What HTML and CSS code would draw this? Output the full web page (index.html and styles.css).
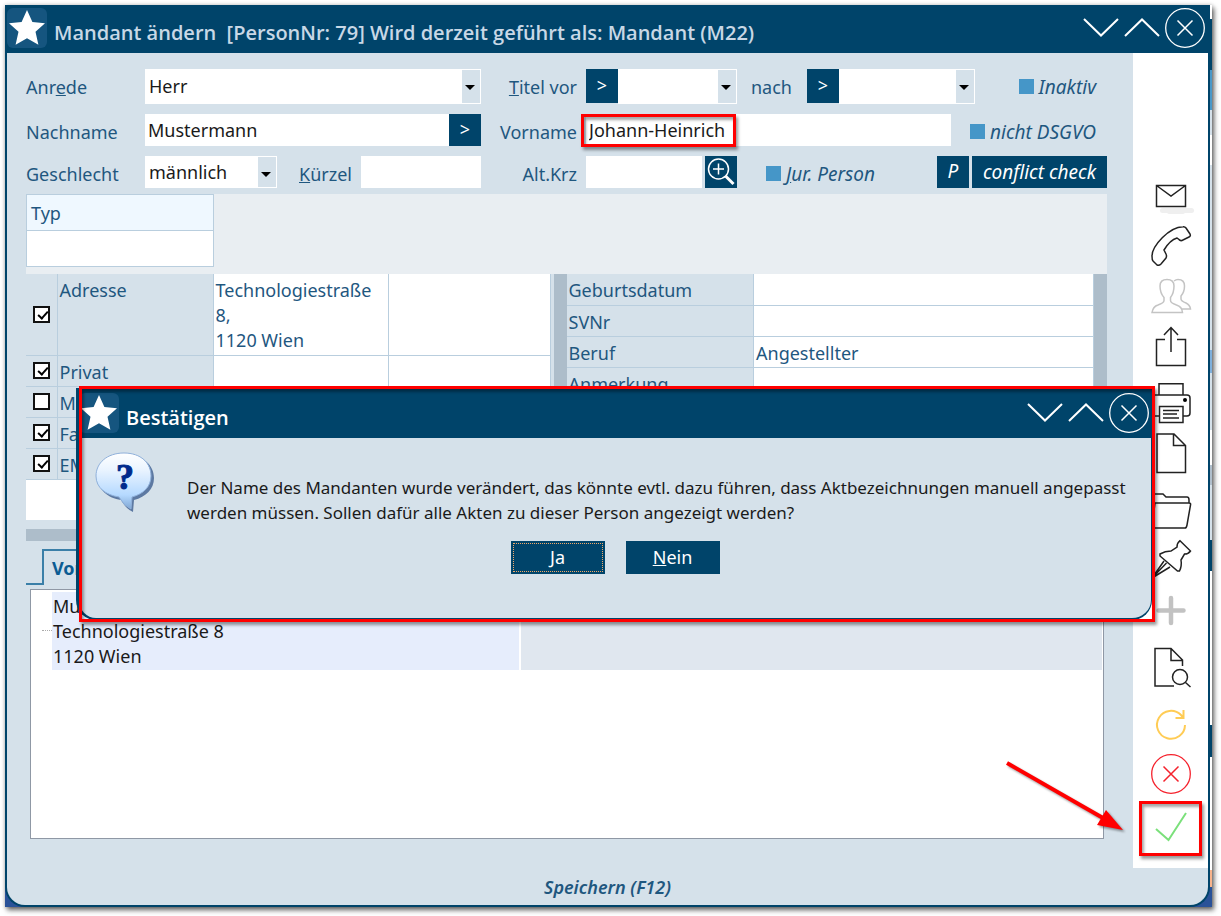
FILE: index.html
```html
<!DOCTYPE html>
<html lang="de">
<head>
<meta charset="utf-8">
<title>Mandant ändern</title>
<link rel="stylesheet" href="styles.css">
</head>
<body>
<svg class="defs" aria-hidden="true">
  <symbol id="star" viewBox="0 0 40 40"><path d="M20 2l5.400 12 12.600 1.200-9.500 8.600 2.900 13L20 30.200 8.600 36.800l2.900-13L2 15.200 14.600 14z" fill="#fff"/></symbol>
  <symbol id="down" viewBox="0 0 36 20"><path d="M1 1l17 16.500L35 1" fill="none" stroke="#fff" stroke-width="2"/></symbol>
  <symbol id="up" viewBox="0 0 36 20"><path d="M1 18L18 1.500 35 18" fill="none" stroke="#fff" stroke-width="2"/></symbol>
  <symbol id="close" viewBox="0 0 40 40"><circle cx="20" cy="20" r="19.300" fill="none" stroke="currentColor" stroke-width="1.300"/><path d="M12.500 12.500l15 15m0-15l-15 15" fill="none" stroke="currentColor" stroke-width="1.500"/></symbol>
</svg>

<div class="shot">
<div class="window">
  <header class="titlebar">
    <span class="logo"><svg><use href="#star"/></svg></span>
    <h1 class="title">Mandant ändern  [PersonNr: 79] Wird derzeit geführt als: Mandant (M22)</h1>
    <div class="controls">
      <button type="button" class="ctl" aria-label="Minimieren"><svg class="chev"><use href="#down"/></svg></button>
      <button type="button" class="ctl" aria-label="Maximieren"><svg class="chev"><use href="#up"/></svg></button>
      <button type="button" class="ctl" aria-label="Schließen"><svg class="circ"><use href="#close"/></svg></button>
    </div>
  </header>

  <div class="content">
    <main class="main">
      <form class="form">
        <div class="row row-tall">
          <label for="anrede">Anr<u>e</u>de</label>
          <span class="select"><select id="anrede"><option>Herr</option></select></span>
          <label for="titelvor" class="lab-right"><u>T</u>itel vor</label>
          <div class="cell">
            <button type="button" class="btn sq">&gt;</button>
            <span class="select w-vor"><select id="titelvor"><option></option></select></span>
            <label for="titelnach" class="lab-nach">nach</label>
            <button type="button" class="btn sq">&gt;</button>
            <span class="select w-nach"><select id="titelnach"><option></option></select></span>
            <label class="check end"><input type="checkbox">Inaktiv</label>
          </div>
        </div>
        <div class="row">
          <label for="nachname">Nachname</label>
          <div class="cell"><input class="text" id="nachname" value="Mustermann"><button type="button" class="btn sq">&gt;</button></div>
          <label for="vorname" class="lab-right">Vorname</label>
          <div class="cell">
            <span class="vorname"><input class="text" id="vorname" value="Johann-Heinrich"><span class="mark mark-name"></span></span>
            <label class="check end"><input type="checkbox">nicht DSGVO</label>
          </div>
        </div>
        <div class="row">
          <label for="geschlecht">Geschlecht</label>
          <div class="cell">
            <span class="select w-sex"><select id="geschlecht"><option>männlich</option></select></span>
            <label for="kuerzel" class="lab-kz"><u>K</u>ürzel</label>
            <input class="text" id="kuerzel">
          </div>
          <label for="altkrz" class="lab-right">Alt.Krz</label>
          <div class="cell">
            <input class="text w-alt" id="altkrz">
            <button type="button" class="btn sq search" aria-label="Suchen"><svg viewBox="0 0 32 32"><g fill="none" stroke="#fff"><circle cx="13.500" cy="13" r="10" stroke-width="1.500"/><path d="M8 13h11M13.500 7.500v11" stroke-width="1.500"/><path d="M20.500 20l8 8" stroke-width="3"/></g></svg></button>
            <label class="check jur"><input type="checkbox"><span><u>J</u>ur. Person</span></label>
            <button type="button" class="btn sq ital p-btn">P</button>
            <button type="button" class="btn ital conflict">conflict check</button>
          </div>
        </div>
      </form>

      <section class="typ">
        <table class="typ-table"><thead><tr><th>Typ</th></tr></thead><tbody><tr><td></td></tr></tbody></table>
      </section>

      <section class="grids">
        <div class="contact">
          <table class="grid">
            <colgroup><col class="c-chk"><col class="c-lab"><col class="c-val"><col></colgroup>
            <tr class="tall"><td class="chk"><input type="checkbox" checked aria-label="Adresse"></td><th>Adresse</th><td>Technologiestraße 8,<br>1120 Wien</td><td></td></tr>
            <tr><td class="chk"><input type="checkbox" checked aria-label="Privat"></td><th>Privat</th><td></td><td></td></tr>
            <tr><td class="chk"><input type="checkbox" aria-label="Mobil"></td><th>Mobil</th><td></td><td></td></tr>
            <tr><td class="chk"><input type="checkbox" checked aria-label="Fax"></td><th>Fax</th><td></td><td></td></tr>
            <tr><td class="chk"><input type="checkbox" checked aria-label="EMail"></td><th>EMail</th><td></td><td></td></tr>
          </table>
        </div>
        <div class="vbar"></div>
        <div class="person">
          <table class="grid">
            <colgroup><col class="c-plab"><col></colgroup>
            <tr><th>Geburtsdatum</th><td></td></tr>
            <tr><th>SVNr</th><td></td></tr>
            <tr><th>Beruf</th><td>Angestellter</td></tr>
            <tr><th>Anmerkung</th><td></td></tr>
          </table>
        </div>
        <div class="vbar"></div>
      </section>
      <div class="hbar"></div>

      <nav class="tabs"><button type="button" class="tab">Vorschau</button></nav>
      <section class="tree">
        <div class="tree-row">
          <span class="branch"></span>
          <div class="node">Mustermann<br>Technologiestraße 8<br>1120 Wien</div>
          <div class="node-rest"></div>
        </div>
      </section>
    </main>

    <aside class="tools">
      <div class="group">
        <button type="button" class="tool" aria-label="E-Mail"><svg viewBox="0 0 40 40"><rect x="9" y="32" width="34" height="5" rx="2.500" fill="#efefef"/><rect x="16" y="34" width="18" height="4" rx="2" fill="#efefef"/><path d="M5.500 9.500h29v21h-29zM5.500 9.500L20 20 34.500 9.500" class="ln"/></svg></button>
        <button type="button" class="tool" aria-label="Anrufen"><svg viewBox="0 0 40 40"><path class="ln" d="M1 30C1 20 18 1 32 .7Q34 .5 35 2L39 8Q40 10 38 11L31 14.500Q29 15 28 13.500L26 12Q19 14 13 24L15 28Q16 30 15 32L10 38Q8 40 6 39L2 35Q1 34 1 30z"/></svg></button>
        <button type="button" class="tool" aria-label="Personen"><svg viewBox="0 0 40 40"><path class="ln grey" d="M1 36.500q1-6 6-7.500 6-2 6-4.500v-3Q9 17 9 10q0-6.500 7-6.500t7 6.500q0 7-3.500 11.500v3q0 2.500 6 4.500 5.500 1.500 6 7.500zM23 5q2-1.500 4-1.500 6.500 0 6.500 6.500 0 6-3.500 10v3q0 2 5 4 4 2 4.500 6H31"/></svg></button>
        <button type="button" class="tool" aria-label="Exportieren"><svg viewBox="0 0 40 40"><path class="ln" d="M14 13.500H5.500v26h29v-26H26M20 26V1.500M13 9l7-7.500L27 9"/></svg></button>
      </div>
      <div class="group">
        <button type="button" class="tool" aria-label="Drucken"><svg viewBox="0 0 40 40"><path class="ln" d="M8 12V.7h24V12M8 33H2V12h34q3 0 3 3v15q0 3-3 3h-4M8.500 23.500h23.500v16H8.500zM12 27.500h16M12 31h14M12 35h16"/><circle cx="34" cy="17" r="2"/></svg></button>
        <button type="button" class="tool" aria-label="Dokument"><svg viewBox="0 0 40 40"><path class="ln" d="M6 1h17l11.500 11.500v27H6zM22.500 1v11.500h12"/></svg></button>
      </div>
      <div class="group">
        <button type="button" class="tool" aria-label="Ordner"><svg viewBox="0 0 40 40"><path class="ln" d="M1 36V7q0-3 3-3h8l3 3h21q2 0 2 3v3M1 36L4 13h34q2 0 1.500 2L36 35q-.5 3-2 3H1"/></svg></button>
        <button type="button" class="tool" aria-label="Anheften"><svg viewBox="0 0 40 40"><path class="ln" d="M29 .7L39.500 11q-2 3-6 3L30 20q1 6-1.500 11h-2L9 16v-2q5-3 11-3l6-4q0-4 3-6.300zM13 21L1 38l18-11M15.500 23L2 37"/></svg></button>
        <button type="button" class="tool" aria-label="Hinzufügen"><svg viewBox="0 0 40 40"><path d="M20 8v25M7.500 20.500h25" stroke="#c2c2c2" stroke-width="4.500" stroke-linecap="round"/></svg></button>
      </div>
      <div class="group">
        <button type="button" class="tool" aria-label="Vorschau"><svg viewBox="0 0 40 40"><path class="ln" d="M23 39H4V1.500h16L31.500 13v6M20 1.500V13.500h11.500"/><circle class="ln" cx="29" cy="30" r="7.500"/><path class="ln" d="M34.500 35.500l5 4.500"/></svg></button>
      </div>
      <div class="group">
        <button type="button" class="tool" aria-label="Aktualisieren"><svg viewBox="0 0 40 40"><path fill="none" stroke="#fc5" stroke-width="2" d="M34 21A14 14 0 1 1 30 11L32.500 14M32.500 6v8H24.500"/></svg></button>
        <button type="button" class="tool red" aria-label="Abbrechen"><svg><use href="#close"/></svg></button>
        <button type="button" class="tool last" aria-label="Speichern"><svg viewBox="0 0 40 40"><path fill="none" stroke="#7be07b" stroke-width="2" d="M5 21l12.500 11L35 5"/></svg><span class="mark mark-save"></span></button>
      </div>
    </aside>
  </div>

  <footer class="footer">Speichern (F12)</footer>

  <svg class="arrow" viewBox="0 0 120 74" aria-hidden="true"><path d="M4 4L100 59" stroke="#f00" stroke-width="4"/><path d="M103 51L120 71 94 66z" fill="#f00"/></svg>

  <div class="dialog" role="dialog" aria-labelledby="dlg-title">
    <div class="dlg-box">
      <header class="titlebar dlg-bar">
        <span class="logo"><svg><use href="#star"/></svg></span>
        <h2 class="title dlg-title" id="dlg-title">Bestätigen</h2>
        <div class="controls">
          <button type="button" class="ctl" aria-label="Minimieren"><svg class="chev"><use href="#down"/></svg></button>
          <button type="button" class="ctl" aria-label="Maximieren"><svg class="chev"><use href="#up"/></svg></button>
          <button type="button" class="ctl" aria-label="Schließen"><svg class="circ"><use href="#close"/></svg></button>
        </div>
      </header>
      <div class="dlg-body">
        <svg class="question" viewBox="0 0 62 62" aria-hidden="true">
          <defs><linearGradient id="bub" x1="0" y1="0" x2="0" y2="1"><stop offset="0" stop-color="#fff"/><stop offset=".3" stop-color="#eaf4ff"/><stop offset=".75" stop-color="#b5d9ff"/><stop offset="1" stop-color="#7fa6d3"/></linearGradient></defs>
          <path transform="translate(2 2)" d="M30 2c17 0 28 10 28 23 0 11-8 19-20 22l-1 12q-7-3-12-12C12 45 2 37 2 25 2 12 13 2 30 2z" fill="#34568a" opacity=".75"/>
          <path d="M30 2c17 0 27 10 27 23 0 11-8 18-19 21l-1 12q-7-3-12-12C12 44 2 37 2 25 2 12 13 2 30 2z" fill="url(#bub)" stroke="#8fb0da" stroke-width="1"/>
          <text x="31" y="38" text-anchor="middle" class="qmark">?</text>
        </svg>
        <p class="message">Der Name des Mandanten wurde verändert, das könnte evtl. dazu führen, dass Aktbezeichnungen manuell angepasst werden müssen. Sollen dafür alle Akten zu dieser Person angezeigt werden?</p>
      </div>
      <div class="dlg-actions">
        <button type="button" class="btn dlg-btn focus"><u>J</u>a</button>
        <button type="button" class="btn dlg-btn"><u>N</u>ein</button>
      </div>
    </div>
    <span class="mark mark-dialog"></span>
  </div>
</div>
</div>
</body>
</html>
```

FILE: styles.css
```css
* { box-sizing: border-box; }

body {
  margin: 0;
  padding: 5px 9px 9px 5px;
  min-height: 100vh;
  display: flex;
  background: #fff;
  color: #1f577f;
  font: 18px/25px "Noto Sans", "Open Sans", sans-serif;
}

button, input, select { font: inherit; margin: 0; border: 0; border-radius: 0; }
button { padding: 0; cursor: pointer; }
h1, h2, p { margin: 0; }
.defs { position: absolute; width: 0; height: 0; }

.shot {
  flex: 1;
  display: flex;
  padding-right: 2px;
  background: linear-gradient(#fff 14px, #00446a 14px 65px, #4a98c8 65px 105px, #d5e1ea 105px 130px, #fff 130px 160px, #d5e1ea 160px 345px, #7fb0dc 345px 368px, #d5e1ea 368px 425px, #fff 425px 460px, #b0bfcc 460px 480px, #d5e1ea 480px 535px, #00446a 535px 566px, #fff 566px 720px, #00446a 720px 752px, #fff 752px 865px, #f9b48c 865px 882px, #2a5298 882px);
  box-shadow: 2px 3px 5px rgba(0, 0, 0, .6), 0 0 4px rgba(0, 0, 0, .2);
}

.window {
  position: relative;
  flex: 1;
  display: flex;
  flex-direction: column;
  border: 2px solid #00446a;
  border-top: 0;
  border-radius: 0 0 20px 20px;
  background: #d5e1ea;
}

.titlebar {
  display: flex;
  align-items: center;
  height: 48px;
  padding: 0 3px 2px 0;
  background: #00446a;
}
.logo {
  display: flex;
  width: 40px;
  height: 40px;
  border-radius: 6px;
  background: #15557f;
}
.logo svg { width: 40px; height: 40px; }
.title {
  flex: 1;
  padding: 8px 0 0 7px;
  font: 600 20px/25px "Open Sans", "Noto Sans", sans-serif;
  color: #c8d8e6;
  white-space: pre;
}
.controls { display: flex; align-items: center; gap: 5px; }
.ctl { display: flex; background: none; color: #fff; }
.chev { width: 36px; height: 20px; }
.circ { width: 40px; height: 40px; }

.content { flex: 1; display: flex; }
.main {
  flex: 1;
  min-width: 0;
  display: flex;
  flex-direction: column;
  padding: 16px 26px 29px 19px;
}

.form { display: flex; flex-direction: column; gap: 10px; }
.row {
  display: grid;
  grid-template-columns: 119px minmax(0, 336fr) 105px minmax(0, 521fr);
  height: 32px;
}
.row-tall { height: 35px; }
.row label { padding-top: 6px; white-space: nowrap; }
.row .lab-right { justify-self: end; padding-right: 9px; }
.cell { display: flex; min-width: 0; }
.text {
  flex: 1;
  min-width: 0;
  padding: 0 3px;
  background: #fff;
  color: #1a1a1a;
}
.select { position: relative; display: flex; border: 1px solid #fff; }
.select select {
  flex: 1;
  min-width: 0;
  padding: 0 20px 0 3px;
  appearance: none;
  background: linear-gradient(#d5e1ea, #d5e1ea) right / 18px 100% no-repeat #fff;
  color: #1a1a1a;
}
.select::after {
  content: "";
  position: absolute;
  right: 5px;
  top: 15px;
  border: 5px solid transparent;
  border-top-color: #000;
  border-bottom: 0;
  pointer-events: none;
}
.w-vor { flex: 0 1 119px; }
.w-nach { flex: 0 1 136px; }
.w-sex { flex: 0 0 132px; }
.row .lab-nach { padding-left: 14px; width: 70px; }
.row .lab-kz { padding-left: 22px; width: 84px; }
.btn { background: #00446a; color: #fff; }
.sq { flex: 0 0 32px; }
.row .sq { padding-bottom: 2px; }
.row-tall .sq { height: 34px; }
.ital { font-size: 19px; font-style: italic; }
.check { display: flex; align-items: flex-start; gap: 5px; font-size: 19px; font-style: italic; }
.check input {
  appearance: none;
  width: 15px;
  height: 15px;
  margin-top: 4px;
  background: #4596c8;
}
.check.end { margin-left: auto; padding-right: 11px; }
.vorname { position: relative; flex: 0 1 365px; display: flex; }
.w-alt { flex: 0 0 116px; }
.row .search { margin-left: 3px; padding: 0; }
.search svg { display: block; width: 32px; height: 32px; }
.jur { margin-left: 29px; }
.p-btn { margin-left: auto; }
.conflict { margin-left: 3px; width: 135px; }

.typ { margin-top: 6px; height: 80px; background: #e9eef2; }
.typ-table { width: 188px; border-collapse: collapse; }
.typ-table th, .typ-table td {
  height: 36px;
  padding: 2px 4px 0;
  border: 1px solid #b9cede;
  background: #fff;
  text-align: left;
  font-weight: 400;
}
.typ-table th { background: #eff8ff; }

.grids { display: flex; height: 246px; overflow: hidden; }
.contact { flex: 525 1 0; margin-right: 3px; background: #fff; overflow: hidden; }
.person { flex: 528 1 0; background: #fff; overflow: hidden; }
.vbar { flex: 0 0 13px; background: #adbdca; }
.grid { width: 100%; border-collapse: collapse; table-layout: fixed; }
.grid th, .grid td {
  height: 31px;
  padding: 4px 2px 1px;
  border-right: 1px solid #b9cede;
  border-bottom: 1px solid #b9cede;
  text-align: left;
  vertical-align: top;
  font-weight: 400;
}
.grid th, .grid .chk { background: #d5e1ea; }
.grid .chk { padding: 0; text-align: center; vertical-align: middle; }
.tall td { height: 81px; }
.c-chk { width: 31px; }
.c-lab { width: 156px; }
.c-val { width: 175px; }
.c-plab { width: 187px; }
.chk input {
  appearance: none;
  display: block;
  width: 17px;
  height: 17px;
  margin: 0 auto;
  border: 2px solid #111;
  background: #fff;
}
.chk input:checked::after {
  content: "";
  display: block;
  width: 4px;
  height: 8px;
  margin: 1px 0 0 5px;
  border: solid #000;
  border-width: 0 2px 2px 0;
  transform: rotate(42deg);
}
.hbar { height: 12px; margin-top: 9px; background: #adbdca; }

.tabs { display: flex; margin-top: 8px; }
.tabs::before { content: ""; width: 16px; border-bottom: 2px solid #3a7fa8; }
.tab {
  height: 36px;
  padding: 0 8px;
  border: 2px solid #3a7fa8;
  border-width: 2px 2px 0;
  background: none;
  color: #0b5c93;
  font-weight: 700;
}

.tree {
  flex: 1;
  margin: 4px 3px 0 4px;
  padding: 2px 1px;
  border: 1px solid #8f98a5;
  background: #fff;
}
.tree-row { display: flex; }
.branch {
  flex: 0 0 10px;
  margin: 38px 0 0 10px;
  border-top: 1px dotted #aaa;
}
.node {
  flex: 466 1 0;
  padding: 2px 1px 1px;
  margin-right: 2px;
  background: #e6edfc;
  color: #1a1a1a;
}
.node-rest { flex: 583 1 0; background: #e0e7ef; }

.tools {
  display: flex;
  flex-direction: column;
  align-items: center;
  gap: 17px;
  width: 75px;
  padding: 123px 0 20px;
  background: #fff;
}
.group { display: flex; flex-direction: column; gap: 10px; }
.tool { position: relative; display: block; width: 40px; height: 40px; background: none; color: #222; }
.tool svg { display: block; width: 40px; height: 40px; overflow: visible; }
.ln { fill: none; stroke: #222; stroke-width: 1.500; }
.grey { stroke: #c4c4c4; }
.red { color: #f5222d; }
.last { margin-top: 4px; }

.footer {
  height: 37px;
  padding-top: 7px;
  text-align: center;
  font-size: 18px;
  font-style: italic;
  font-weight: 600;
}

.mark {
  position: absolute;
  border: 3px solid #f00;
  box-shadow: 2px 3px 3px rgba(0, 0, 0, .4), inset 2px 3px 3px rgba(0, 0, 0, .35);
  pointer-events: none;
}
.mark-name { left: -5px; top: 0; width: 155px; height: 33px; }
.mark-save { left: -12px; top: -7px; width: 63px; height: 55px; }
.mark-dialog { inset: -2px -3px -2px 3px; }

.arrow {
  position: absolute;
  right: 85px;
  bottom: 72px;
  width: 120px;
  height: 74px;
  filter: drop-shadow(2px 2px 1px rgba(0, 0, 0, .4));
}

.dialog { position: absolute; left: 69px; right: 56px; top: 383px; }
.dlg-box {
  border: solid #00446a;
  border-width: 0 1px 2px 3px;
  border-radius: 0 0 20px 20px;
  background: #d5e1ea;
  overflow: hidden;
}
.dlg-bar { height: 50px; padding: 0 2px 0 0; }
.dlg-title { color: #fff; }
.dlg-body { display: flex; padding: 13px 0 0 15px; }
.question { flex: 0 0 62px; width: 62px; height: 62px; }
.qmark { font: 700 36px "Liberation Serif", serif; fill: #002a8c; stroke: #002a8c; stroke-width: 1; }
.message {
  flex: 1;
  padding: 24px 0 0 31px;
  color: #1a1a1a;
  font-size: 17px;
}
.dlg-actions { display: flex; justify-content: center; gap: 21px; padding: 16px 0 44px; }
.dlg-btn { width: 94px; height: 33px; }
.focus { outline: 1px dotted #f0a868; outline-offset: -3px; }
```
